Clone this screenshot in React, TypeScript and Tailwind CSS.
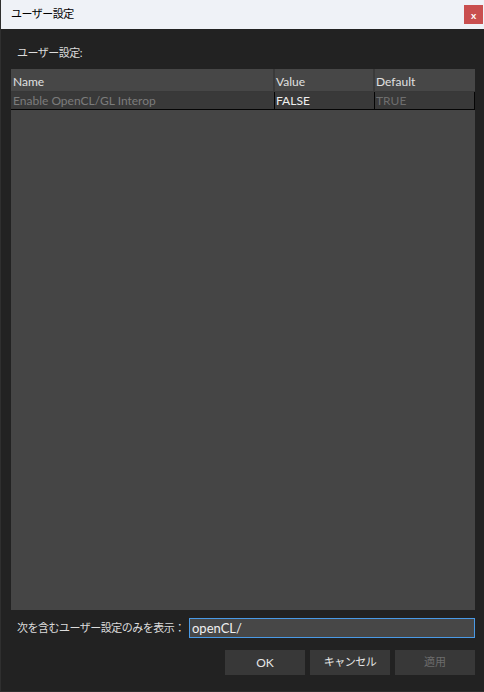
import React, { useState } from "react";

const jp = {
  fontFamily: 'Lato, "Noto Sans CJK JP", sans-serif',
};

interface Pref {
  name: string;
  value: string;
  def: string;
}

const prefs: Pref[] = [
  { name: "Enable OpenCL/GL Interop", value: "FALSE", def: "TRUE" },
];

export default function App() {
  const [filter, setFilter] = useState("openCL/");

  return (
    <div
      className="w-[484px] h-[692px] flex flex-col bg-[#222222] text-[12px] overflow-hidden border-l border-b border-[#2f2f2f]"
      style={jp}
    >
      {/* title bar */}
      <div className="h-[29px] shrink-0 bg-[#eff2f7] flex items-center justify-between pl-[10px] pr-px">
        <span className="text-[11px] tracking-[-0.5px] text-black">ユーザー設定</span>
        <button className="w-[19px] h-[19px] bg-[#c94f4f] text-white text-[10px] font-bold flex items-center justify-center leading-none">
          x
        </button>
      </div>

      <div className="flex-1 flex flex-col pl-[10px] pr-[9px]">
        <div className="h-[40px] flex items-center pl-[6px] pt-[8px] text-[11px] tracking-[-0.5px] text-[#dcdcdc]">
          ユーザー設定:
        </div>

        {/* table */}
        <div className="h-[541px] bg-[#454545] flex flex-col">
          <div className="h-[23px] flex text-[#e0e0e0] border-b border-[#383838]">
            <div className="w-[264px] pl-[2px] pt-[3px] flex items-center border-r-2 border-[#3a3a3a] bg-[#474747]">
              Name
            </div>
            <div className="w-[100px] pl-[1px] pt-[3px] flex items-center border-r-2 border-[#3a3a3a] bg-[#474747]">
              Value
            </div>
            <div className="flex-1 pl-[1px] pt-[3px] flex items-center bg-[#474747]">
              Default
            </div>
          </div>
          {prefs.map((p) => (
            <div
              key={p.name}
              className="h-[18px] flex bg-[#393939] border-b border-[#050505] border-r border-r-[#050505]"
            >
              <div className="w-[264px] pl-[2px] pt-px flex items-center text-[#7c7c7c] border-r border-[#050505] whitespace-nowrap">
                {p.name}
              </div>
              <div className="w-[100px] pl-[1px] pt-px flex items-center text-[#f0f0f0] border-r border-[#050505]">
                {p.value}
              </div>
              <div className="flex-1 pl-[1px] pt-px flex items-center text-[#6e6e6e]">
                {p.def}
              </div>
            </div>
          ))}
        </div>

        {/* filter */}
        <div className="h-[36px] flex items-center">
          <span className="w-[178px] pl-[6px] text-[11px] tracking-[-0.5px] text-[#dcdcdc] whitespace-nowrap">
            次を含むユーザー設定のみを表示：
          </span>
          <input
            value={filter}
            onChange={(e) => setFilter(e.target.value)}
            className="flex-1 h-[20px] bg-[#474747] border border-[#4a9ae6] text-[#f0f0f0] px-[2px] text-[13px] outline-none"
            style={jp}
          />
        </div>

        {/* buttons */}
        <div className="flex justify-end gap-[5px] pt-[4px]">
          <button className="w-[80px] h-[25px] bg-[#383838] text-[#e6e6e6]">OK</button>
          <button className="w-[80px] h-[25px] bg-[#383838] text-[#e6e6e6] text-[11px] tracking-[-0.5px]">キャンセル</button>
          <button className="w-[80px] h-[25px] bg-[#383838] text-[#6c6c6c] text-[11px]">適用</button>
        </div>
      </div>
    </div>
  );
}
